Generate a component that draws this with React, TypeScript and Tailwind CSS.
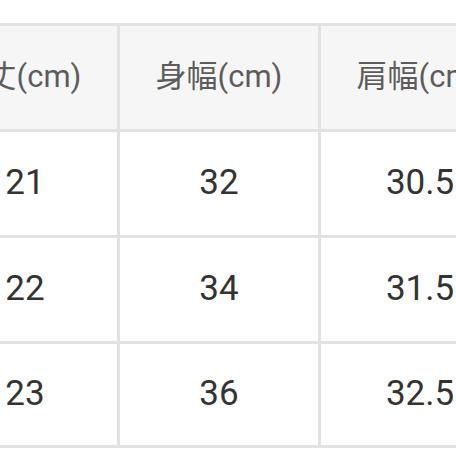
const headers = ["着丈(cm)", "身幅(cm)", "肩幅(cm)"];

const rows = [
  ["21", "32", "30.5"],
  ["22", "34", "31.5"],
  ["23", "36", "32.5"],
];

export default function App() {
  return (
    <div
      className="w-[456px] h-[456px] overflow-hidden bg-white pt-[23px]"
      style={{ fontFamily: "Roboto, 'Noto Sans CJK JP', sans-serif" }}
    >
      {/* size table, cropped on both sides */}
      <div className="-ml-[84px] w-[600px] grid grid-cols-[198px_198px_198px] grid-rows-[103px_103px_103px_101px] gap-[3px] p-[3px] bg-[#e2e2e2]">
        {headers.map((h) => (
          <div
            key={h}
            className="bg-[#f6f6f6] flex items-center justify-center text-[31px] text-[#5c5c5c]"
          >
            {h}
          </div>
        ))}
        {rows.map((row) =>
          row.map((v, i) => (
            <div
              key={row[0] + i}
              className={`bg-white flex items-center justify-center text-[35px] text-[#333333] ${
                i === 0 ? "pl-[14px]" : ""
              }`}
            >
              {v}
            </div>
          ))
        )}
      </div>
    </div>
  );
}
